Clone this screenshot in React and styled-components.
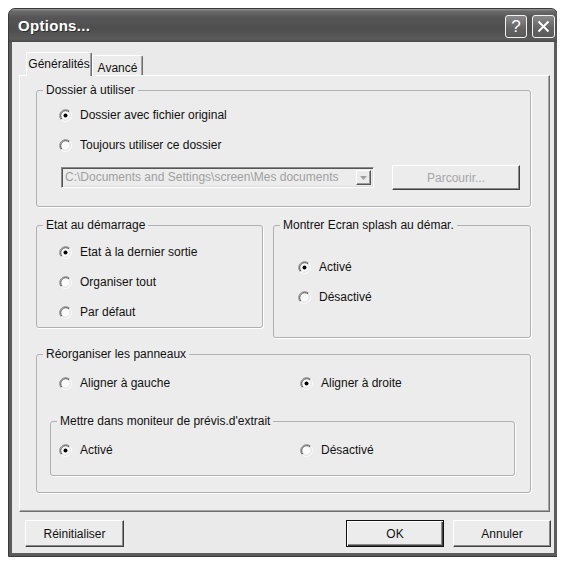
import styled, { createGlobalStyle } from 'styled-components';

const Global = createGlobalStyle`
  body {
    margin: 8px;
    background: #fff;
    font-family: "Liberation Sans", Arial, sans-serif;
    font-size: 12px;
    color: #111;
  }
`;

const Radio = ({ checked, children }) => (
  <RadioLabel>
    <svg width="13" height="13" viewBox="0 0 13 13">
      <circle cx="6.5" cy="6.5" r="5.5" fill="#fbfbfb" />
      <path d="M2.26 10.74 A6 6 0 0 1 10.74 2.26" stroke="#8c8c8c" fill="none" />
      <path d="M2.97 10.03 A5 5 0 0 1 10.03 2.97" stroke="#4a4a4a" fill="none" />
      <path d="M10.74 2.26 A6 6 0 0 1 2.26 10.74" stroke="#fff" fill="none" />
      <path d="M10.03 2.97 A5 5 0 0 1 2.97 10.03" stroke="#dcdcdc" fill="none" />
      {checked && <circle cx="6.5" cy="6.5" r="2" fill="#000" />}
    </svg>
    {children}
  </RadioLabel>
);

const App = () => {
  return (
    <>
      <Global />
      <Window>
        <TitleBar>
          <Title>Options...</Title>
          <CaptionButtons>
            <CaptionButton $w={22}>?</CaptionButton>
            <CaptionButton $w={23}>
              <svg width="13" height="13" viewBox="0 0 13 13">
                <path d="M1.5 1.5 L11.5 11.5 M11.5 1.5 L1.5 11.5" stroke="#fff" strokeWidth="2" />
              </svg>
            </CaptionButton>
          </CaptionButtons>
        </TitleBar>

        <Body>
          <TabStrip>
            <Tab $active $w={66}>Généralités</Tab>
            <Tab $w={51}>Avancé</Tab>
          </TabStrip>

          <TabPanel>
            <Group $h={124}>
              <Caption>Dossier à utiliser</Caption>
              <GroupBody $pad="3px 10px 0 22px">
                <Radio checked>Dossier avec fichier original</Radio>
                <Radio>Toujours utiliser ce dossier</Radio>
                <PathRow>
                  <Combo>
                    <ComboText>C:\Documents and Settings\screen\Mes documents</ComboText>
                    <ComboArrow>
                      <svg width="7" height="4" viewBox="0 0 7 4">
                        <path d="M0 0 H7 L3.5 4 Z" fill="#a0a0a0" />
                      </svg>
                    </ComboArrow>
                  </Combo>
                  <PushButton $w={128} $h={25} disabled>Parcourir...</PushButton>
                </PathRow>
              </GroupBody>
            </Group>

            <GroupRow>
              <Group $h={110} $w={227}>
                <Caption>Etat au démarrage</Caption>
                <GroupBody $pad="5px 0 0 22px">
                  <Radio checked>Etat à la dernier sortie</Radio>
                  <Radio>Organiser tout</Radio>
                  <Radio>Par défaut</Radio>
                </GroupBody>
              </Group>
              <Group $h={120} $w={258}>
                <Caption>Montrer Ecran splash au démar.</Caption>
                <GroupBody $pad="20px 0 0 24px">
                  <Radio checked>Activé</Radio>
                  <Radio>Désactivé</Radio>
                </GroupBody>
              </Group>
            </GroupRow>

            <Group $h={146} $mt={9}>
              <Caption>Réorganiser les panneaux</Caption>
              <GroupBody $pad="7px 15px 0 13px">
                <RadioGrid $indent={9}>
                  <Radio>Aligner à gauche</Radio>
                  <Radio checked>Aligner à droite</Radio>
                </RadioGrid>
                <Group $h={62} $mt={16}>
                  <Caption>Mettre dans moniteur de prévis.d'extrait</Caption>
                  <GroupBody $pad="7px 0 0 8px">
                    <RadioGrid>
                      <Radio checked>Activé</Radio>
                      <Radio>Désactivé</Radio>
                    </RadioGrid>
                  </GroupBody>
                </Group>
              </GroupBody>
            </Group>
          </TabPanel>

          <Footer>
            <PushButton $w={99}>Réinitialiser</PushButton>
            <Spacer />
            <PushButton $w={98} $default>OK</PushButton>
            <PushButton $w={98}>Annuler</PushButton>
          </Footer>
        </Body>
      </Window>
    </>
  );
};

const Window = styled.div`
  width: 550px;
  height: 549px;
  box-sizing: border-box;
  display: flex;
  flex-direction: column;
  background: #5c5c5c;
  border: 1px solid #3a3a3a;
  border-radius: 7px 7px 0 0;
`;

const TitleBar = styled.div`
  height: 33px;
  flex: none;
  display: flex;
  align-items: flex-start;
  justify-content: space-between;
  padding: 0 2px 0 9px;
  border-radius: 6px 6px 0 0;
  background: linear-gradient(
    to bottom,
    #9a9a9a 0px,
    #6c6c6c 2px,
    #565656 8px,
    #4e4e4e 20px,
    #5a5a5a 30px,
    #4a4a4a 33px
  );
`;

const Title = styled.div`
  margin-top: 8px;
  color: #fff;
  font-size: 15px;
  font-weight: bold;
  letter-spacing: 0.3px;
  text-shadow: 1px 1px 0 #2e2e2e;
`;

const CaptionButtons = styled.div`
  display: flex;
  gap: 5px;
  margin-top: 6px;
`;

const CaptionButton = styled.div`
  width: ${(p) => p.$w}px;
  height: 23px;
  box-sizing: border-box;
  display: flex;
  align-items: center;
  justify-content: center;
  border: 1px solid #f2f2f2;
  border-radius: 3px;
  background: linear-gradient(to bottom, #8a8a8a, #636363 60%, #5a5a5a);
  color: #fff;
  font-size: 17px;
`;

const Body = styled.div`
  flex: 1;
  margin: 0 3px 3px;
  padding: 10px 4px 6px 7px;
  background: #eaeaea;
  display: flex;
  flex-direction: column;
`;

const TabStrip = styled.div`
  height: 24px;
  margin-bottom: -1px;
  padding-left: 7px;
  display: flex;
  align-items: flex-end;
  position: relative;
  z-index: 1;
`;

const Tab = styled.div`
  width: ${(p) => p.$w}px;
  height: ${(p) => (p.$active ? 24 : 20)}px;
  margin-bottom: ${(p) => (p.$active ? 0 : 1)}px;
  box-sizing: border-box;
  display: flex;
  justify-content: center;
  padding-top: ${(p) => (p.$active ? 4 : 5)}px;
  background: #ececec;
  border-top: 1px solid #fff;
  border-left: 1px solid #fff;
  border-right: 1px solid #6e6e6e;
  border-radius: 2px 2px 0 0;
  box-shadow: inset -1px 0 0 #a4a4a4;
`;

const TabPanel = styled.div`
  height: 437px;
  flex: none;
  box-sizing: border-box;
  display: flex;
  flex-direction: column;
  padding: 7px 18px 0 16px;
  background: #ececec;
  border: 1px solid;
  border-color: #fff #6e6e6e #6e6e6e #fff;
  box-shadow: inset -1px -1px 0 #a4a4a4;
`;

const Group = styled.fieldset`
  margin: ${(p) => p.$mt || 0}px 0 0;
  padding: 0;
  min-width: 0;
  width: ${(p) => (p.$w ? `${p.$w}px` : 'auto')};
  height: ${(p) => p.$h}px;
  box-sizing: border-box;
  border: 1px solid #b0b0b0;
  border-radius: 3px;
  box-shadow: 1px 1px 0 #fff;
`;

const Caption = styled.legend`
  margin-left: 6px;
  padding: 0 3px;
  line-height: 14px;
  font-size: 12px;
`;

const GroupBody = styled.div`
  padding: ${(p) => p.$pad};
`;

const GroupRow = styled.div`
  display: flex;
  align-items: flex-start;
  justify-content: space-between;
  margin-top: 11px;
`;

const RadioLabel = styled.label`
  height: 30px;
  display: flex;
  align-items: center;
  gap: 8px;
  white-space: nowrap;

  svg {
    flex: none;
  }
`;

const RadioGrid = styled.div`
  display: grid;
  grid-template-columns: 241px 1fr;
  padding-left: ${(p) => p.$indent || 0}px;
`;

const PathRow = styled.div`
  display: flex;
  align-items: center;
  gap: 18px;
  height: 25px;
  margin-top: 5px;
  padding-left: 2px;
`;

const Combo = styled.div`
  width: 313px;
  height: 21px;
  box-sizing: border-box;
  display: flex;
  align-items: stretch;
  padding: 2px;
  border: 1px solid;
  border-color: #8a8a8a #fff #fff #8a8a8a;
  box-shadow: inset 1px 1px 0 #555, inset -1px -1px 0 #dcdcdc;
  background: #ececec;
`;

const ComboText = styled.div`
  flex: 1;
  padding-left: 1px;
  line-height: 15px;
  color: #a0a0a0;
  white-space: nowrap;
  overflow: hidden;
`;

const ComboArrow = styled.div`
  width: 15px;
  box-sizing: border-box;
  display: flex;
  align-items: center;
  justify-content: center;
  border: 1px solid;
  border-color: #fff #555 #555 #fff;
  box-shadow: inset -1px -1px 0 #9a9a9a;
  background: #ececec;
`;

const PushButton = styled.button`
  width: ${(p) => p.$w}px;
  height: ${(p) => p.$h || 27}px;
  box-sizing: border-box;
  padding: 0;
  font-family: inherit;
  font-size: 12px;
  color: #111;
  background: #ececec;
  border: 1px solid;
  border-color: ${(p) => (p.$default ? '#111' : '#fff #404040 #404040 #fff')};
  box-shadow: ${(p) =>
    p.$default
      ? 'inset 1px 1px 0 #fff, inset -1px -1px 0 #404040, inset -2px -2px 0 #8a8a8a'
      : 'inset -1px -1px 0 #8a8a8a'};

  &:disabled {
    color: #a6a6a6;
  }
`;

const Footer = styled.div`
  height: 27px;
  margin: 8px -1px 0 0;
  padding-left: 6px;
  display: flex;
  gap: 9px;
`;

const Spacer = styled.div`
  flex: 1;
`;

export default App;
